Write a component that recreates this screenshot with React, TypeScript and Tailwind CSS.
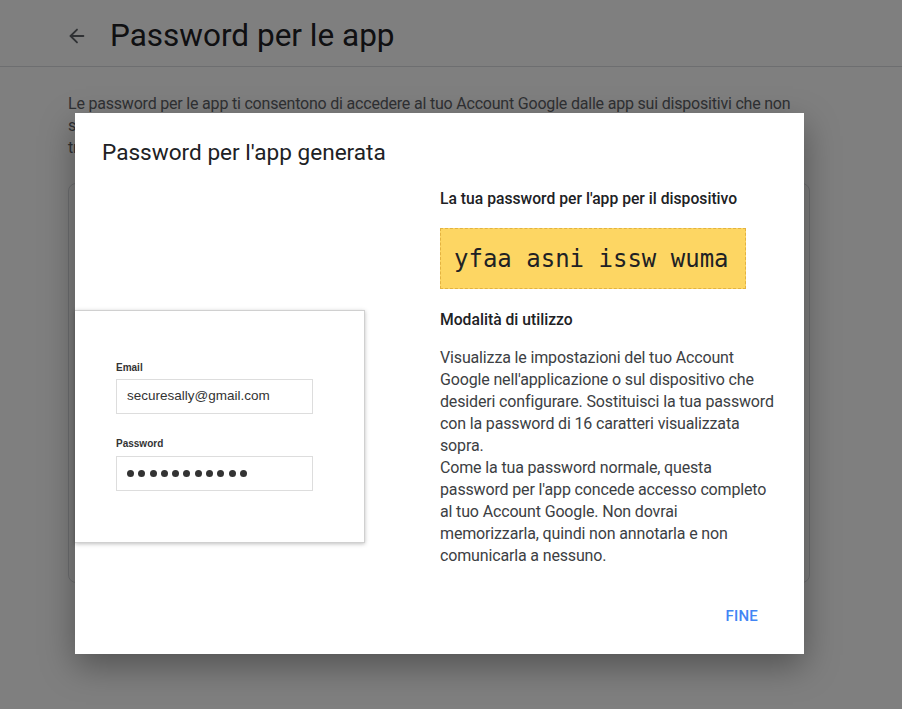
import { ArrowLeft } from 'lucide-react';

const Illustration = () => (
  <div className="w-[290px] h-[233px] bg-white border border-[#d0d0d0] border-l-0 shadow-[0_1px_4px_rgba(0,0,0,0.25)] pl-[41px] pt-[51px] font-['Liberation_Sans',Arial,sans-serif]">
    <div className="text-[10px] font-bold text-[#333] leading-[12px]">Email</div>
    <div className="mt-[5px] w-[197px] h-[35px] border border-[#ddd] flex items-center px-[10px] text-[13.5px] text-[#333]">
      securesally@gmail.com
    </div>
    <div className="mt-[24px] text-[10px] font-bold text-[#333] leading-[12px]">Password</div>
    <div className="mt-[6px] w-[197px] h-[35px] border border-[#ddd] flex items-center px-[10px] gap-[4.3px]">
      {Array.from({ length: 11 }).map((_, i) => (
        <span key={i} className="w-[7px] h-[7px] rounded-full bg-[#333]" />
      ))}
    </div>
  </div>
);

export default function App() {
  return (
    <div className="relative w-[902px] h-[709px] overflow-hidden bg-white font-['Roboto',sans-serif]">
      {/* Background page */}
      <div className="h-[67px] border-b border-[#dadce0] flex items-center pl-[66px] pt-[5px]">
        <ArrowLeft className="w-[22px] h-[22px] text-[#5f6368]" strokeWidth={2} />
        <h1 className="ml-[22px] text-[31.5px] text-[#202124] leading-[40px]">Password per le app</h1>
      </div>
      <p className="ml-[68px] mt-[26px] w-[745px] text-[16px] tracking-[-0.2px] leading-[22px] text-[#5f6368] whitespace-nowrap">
        Le password per le app ti consentono di accedere al tuo Account Google dalle app sui dispositivi che non
        <br />
        supportano la verifica in due passaggi. Dovrai inserirla solo una volta, quindi non è necessario
        <br />
        trascriverla o memorizzarla.
      </p>
      <div className="ml-[68px] mt-[24px] w-[742px] h-[400px] rounded-lg border border-[#dadce0]" />

      {/* Scrim */}
      <div className="absolute inset-0 bg-black/50" />

      {/* Dialog */}
      <div className="absolute left-[75px] top-[113px] w-[729px] h-[541px] bg-white shadow-[0_12px_32px_rgba(0,0,0,0.35)] flex flex-col">
        <h2 className="pl-[27px] pt-[24px] text-[22.6px] leading-[32px] text-[#202124]">Password per l'app generata</h2>
        <div className="flex mt-[20px]">
          <div className="w-[365px] pt-[121px]">
            <Illustration />
          </div>
          <div className="w-[340px] text-[#3c4043]">
            <div className="text-[15.7px] leading-[20px] font-medium text-[#202124]">La tua password per l'app per il dispositivo</div>
            <div className="mt-[19px] w-[306px] h-[61px] bg-[#fdd663] border border-dashed border-[#e3b341] flex items-center pl-[13px] font-['DejaVu_Sans_Mono',monospace] text-[24px] text-[#202124]">
              yfaa asni issw wuma
            </div>
            <div className="mt-[21px] text-[15.7px] leading-[20px] font-medium text-[#202124]">Modalità di utilizzo</div>
            <p className="mt-[17px] text-[16px] tracking-[-0.15px] leading-[22px] text-[#3c4043]">
              Visualizza le impostazioni del tuo Account Google nell'applicazione o sul dispositivo che desideri
              configurare. Sostituisci la tua password con la password di 16 caratteri visualizzata sopra.
              <br />
              Come la tua password normale, questa password per l'app concede accesso completo al tuo Account Google.
              Non dovrai memorizzarla, quindi non annotarla e non comunicarla a nessuno.
            </p>
          </div>
        </div>
        <div className="mt-auto mb-[26px] flex justify-end pr-[38px]">
          <button className="px-2 h-[24px] text-[15px] font-medium text-[#4285f4] tracking-[0.2px]">FINE</button>
        </div>
      </div>
    </div>
  );
}
